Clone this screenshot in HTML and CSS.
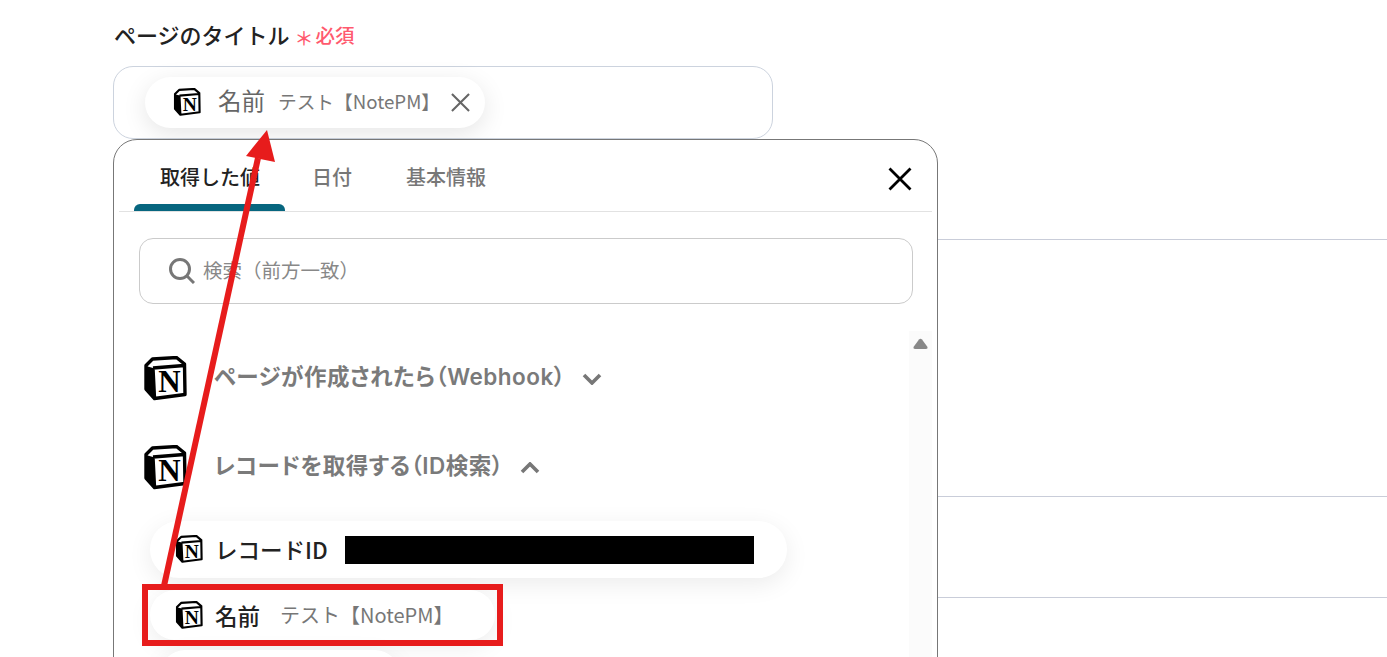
FILE: index.html
```html
<!DOCTYPE html>
<html lang="ja">
<head>
<meta charset="utf-8">
<title>ページのタイトル</title>
<link rel="stylesheet" href="styles.css">
</head>
<body>
<svg class="defs" width="0" height="0" aria-hidden="true">
  <symbol id="notion" viewBox="0 0 44 46">
    <path d="M2 10 L9 3 L34 1.500 L42 8 L42.500 39 L11 42.500 L3 33 Z" fill="#fff"/>
    <path d="M3 9.500 L9.500 3 L33.500 1.500 L41.500 8 L42 38.500 L11.500 42.500 L3 33 Z M10 12 L41 9.500 M10 12 L11.500 42" fill="none" stroke="#000" stroke-width="3.400" stroke-linejoin="round"/>
    <path d="M3 10 L10 12 L11 42 L3 33 Z" fill="#000"/>
    <text x="26.500" y="36" text-anchor="middle" class="notion-n">N</text>
  </symbol>
</svg>

<main class="form">
  <div class="field-label">
    <span class="label-text">ページのタイトル</span>
    <span class="asterisk">＊</span>
    <span class="required">必須</span>
  </div>
  <div class="input-box">
    <div class="value-chip">
      <svg class="icon-chip"><use href="#notion"/></svg>
      <span class="chip-name">名前</span>
      <span class="chip-value">テスト【NotePM】</span>
      <svg class="chip-close" viewBox="0 0 20 20"><path d="M1 1 L19 19 M19 1 L1 19" stroke="#666" stroke-width="2.200" fill="none"/></svg>
    </div>
  </div>
</main>

<div class="dividers">
  <hr class="divider d1">
  <hr class="divider d2">
  <hr class="divider d3">
</div>

<section class="panel">
  <div class="tabs">
    <div class="tab tab-active">取得した値</div>
    <div class="tab tab-date">日付</div>
    <div class="tab tab-basic">基本情報</div>
    <svg class="panel-close" viewBox="0 0 24 24"><path d="M1.500 1.500 L22.500 22.500 M22.500 1.500 L1.500 22.500" stroke="#000" stroke-width="2.800" fill="none"/></svg>
  </div>
  <div class="search">
    <svg class="search-icon" viewBox="0 0 26 26"><circle cx="11" cy="11" r="9.500" fill="none" stroke="#777" stroke-width="3"/><path d="M17.500 17.500 L25 25" stroke="#777" stroke-width="3"/></svg>
    <span class="search-text">検索（前方一致）</span>
  </div>
  <div class="list">
    <div class="scrollbar">
      <svg class="scroll-up" viewBox="0 0 15 11"><path d="M6 1.500 Q7.500 0 9 1.500 L14.500 9 Q15 11 13 11 L2 11 Q0 11 0.500 9 Z" fill="#888"/></svg>
    </div>
    <div class="group">
      <svg class="icon-group"><use href="#notion"/></svg>
      <span class="group-name">ページが作成されたら（Webhook）</span>
      <svg class="chev chev-1" viewBox="0 0 20 12"><path d="M2 2 L10 10 L18 2" fill="none" stroke="#777" stroke-width="3.600"/></svg>
    </div>
    <div class="group group-2">
      <svg class="icon-group"><use href="#notion"/></svg>
      <span class="group-name">レコードを取得する（ID検索）</span>
      <svg class="chev chev-2" viewBox="0 0 20 12"><path d="M2 10 L10 2 L18 10" fill="none" stroke="#777" stroke-width="3.600"/></svg>
    </div>
    <div class="item item-id">
      <svg class="icon-item"><use href="#notion"/></svg>
      <span class="item-name">レコードID</span>
      <span class="redact"></span>
    </div>
    <div class="item item-title">
      <svg class="icon-item"><use href="#notion"/></svg>
      <span class="item-name">名前</span>
      <span class="item-value">テスト【NotePM】</span>
    </div>
    <div class="item item-next"></div>
  </div>
</section>

<div class="highlight"></div>
<svg class="arrow" width="1387" height="657" viewBox="0 0 1387 657">
  <path d="M164 586 L258 158" stroke="#e71c1c" stroke-width="6" fill="none"/>
  <path d="M267 130 L275 162 L246 156 Z" fill="#e71c1c"/>
</svg>
</body>
</html>
```
FILE: styles.css
```css
* { box-sizing: border-box; }
html, body { margin: 0; height: 657px; overflow: hidden; background: #fff; }
body {
  position: relative;
  font-family: "Noto Sans CJK JP", "Noto Sans", sans-serif;
  color: #222;
}
.defs { position: absolute; }
.notion-n { font-family: "Liberation Serif", serif; font-weight: 700; font-size: 31px; fill: #000; }

.form { padding: 18px 0 0 113px; }
.field-label { display: flex; align-items: center; height: 34px; padding-left: 1px; }
.label-text { font-size: 22px; font-weight: 500; line-height: 34px; color: #222; margin-bottom: 2px; }
.asterisk { color: #ff5a6e; font-size: 19px; line-height: 34px; margin: 6px 0 0 5px; font-weight: 500; }
.required { color: #ff5a6e; font-size: 19.500px; font-weight: 500; margin-left: 2px; line-height: 34px; }
.input-box {
  width: 660px; height: 73px; margin-top: 14px;
  border: 1px solid #ccd3de; border-radius: 20px;
  padding: 10px 0 0 31px; background: #fff;
}
.value-chip {
  display: flex; align-items: center; width: 340px; height: 51px;
  background: #fff; border-radius: 26px; padding-left: 28px;
  box-shadow: 0 6px 24px rgba(0, 0, 0, 0.10);
}
.icon-chip { width: 28px; height: 29px; flex: none; }
.chip-name { font-size: 23.500px; color: #666; margin: 0 0 4px 17px; line-height: 1; }
.chip-value { font-size: 18.700px; color: #777; margin: 0 0 3px 13px; line-height: 1; white-space: nowrap; }
.chip-close { width: 19px; height: 19px; margin-left: 11px; flex: none; }

.dividers { position: absolute; inset: 0 0 auto 938px; }
.divider { position: absolute; left: 0; right: 0; margin: 0; border: 0; height: 1px; background: #c9cdd9; }
.d1 { top: 239px; }
.d2 { top: 496px; }
.d3 { top: 597px; }

.panel {
  position: absolute; left: 113px; top: 139px; width: 825px; height: 600px;
  background: #fff; border: 1px solid #777; border-radius: 24px;
  padding: 0 5px;
}
.tabs { position: relative; display: flex; height: 72px; border-bottom: 1px solid #e2e2e2; }
.tab { font-size: 20px; font-weight: 500; color: #777; line-height: 74px; height: 71px; white-space: nowrap; }
.tab-active { position: relative; width: 151px; margin-left: 15px; padding-left: 1px; text-align: center; color: #222; }
.tab-active::after { content: ""; position: absolute; left: 0; right: 0; bottom: 0; height: 7px; background: #07667f; border-radius: 6px 6px 0 0; }
.tab-date { margin-left: 27px; }
.tab-basic { margin-left: 54px; }
.panel-close { position: absolute; right: 20px; top: 27px; width: 24px; height: 24px; }

.search {
  display: flex; align-items: center;
  margin: 26px 19px 0 20px; height: 66px;
  border: 1px solid #cbcbcb; border-radius: 14px; padding-left: 29px;
}
.search-icon { width: 26px; height: 26px; flex: none; }
.search-text { font-size: 19.500px; color: #888; margin: 0 0 2px 8px; line-height: 1; }

.list { position: relative; padding: 52px 0 0 24px; }
.scrollbar { position: absolute; right: 0; top: 27px; width: 23px; height: 400px; background: #fbfbfb; }
.scroll-up { position: absolute; left: 4px; top: 7px; width: 15px; height: 11px; }
.group { display: flex; align-items: center; height: 46px; }
.group-2 { margin-top: 43px; }
.icon-group { width: 44px; height: 46px; flex: none; }
.group-name {
  font-family: "Inter", "Noto Sans CJK JP", sans-serif;
  font-feature-settings: "palt";
  font-size: 22.500px; font-weight: 600; color: #7a7a7a;
  margin: 0 0 4px 27px; line-height: 1; white-space: nowrap; letter-spacing: 0.5px;
}
.chev { width: 20px; height: 12px; flex: none; margin-left: 16px; }

.item { display: flex; align-items: center; background: #fff; border-radius: 29px; box-shadow: 0 6px 24px rgba(0, 0, 0, 0.08); margin-left: 7px; }
.item-id { width: 637px; height: 57px; margin-top: 30px; padding-left: 25px; }
.item-title { width: 345px; height: 50px; margin-top: 12px; padding-left: 25px; }
.item-next { width: 240px; height: 50px; margin: 10px 0 0 17px; }
.icon-item { width: 28px; height: 29px; flex: none; }
.item-name { font-size: 22.500px; font-weight: 500; color: #222; margin-left: 12px; line-height: 1; white-space: nowrap; }
.item-value { font-size: 20px; color: #777; margin-left: 20px; line-height: 1; white-space: nowrap; }
.redact { width: 409px; height: 28px; background: #000; margin-left: 17px; flex: none; }

.highlight { position: absolute; left: 142px; top: 584px; width: 361px; height: 62px; border: 6px solid #e71c1c; }
.arrow { position: absolute; left: 0; top: 0; pointer-events: none; }
```
